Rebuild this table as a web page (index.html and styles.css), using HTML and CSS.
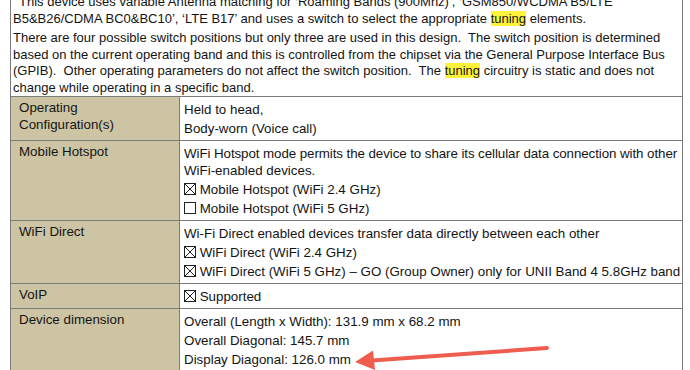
FILE: index.html
```html
<!DOCTYPE html>
<html>
<head>
<meta charset="utf-8">
<link rel="stylesheet" href="styles.css">
</head>
<body>
<table class="doc">
  <colgroup><col class="c1"><col class="c2"></colgroup>
  <tr class="intro">
    <td colspan="2">
      <p class="first">This device uses variable Antenna matching for ‘Roaming Bands (900Mhz)’, ‘GSM850/WCDMA B5/LTE<br>B5&amp;B26/CDMA BC0&amp;BC10’, ‘LTE B17’ and uses a switch to select the appropriate <span class="hl">tuning</span> elements.</p>
      <p>There are four possible switch positions but only three are used in this design.&nbsp; The switch position is determined<br>based on the current operating band and this is controlled from the chipset via the General Purpose Interface Bus<br>(GPIB).&nbsp; Other operating parameters do not affect the switch position.&nbsp; The <span class="hl">tuning</span> circuitry is static and does not<br>change while operating in a specific band.</p>
    </td>
  </tr>
  <tr>
    <td class="label">Operating<br>Configuration(s)</td>
    <td class="val"><p>Held to head,</p><p>Body-worn (Voice call)</p></td>
  </tr>
  <tr>
    <td class="label">Mobile Hotspot</td>
    <td class="val">
      <p><span class="tight">WiFi Hotspot mode permits the device to share its cellular data connection with other</span><br>WiFi-enabled devices.</p>
      <p><svg class="cb" viewBox="0 0 12 12"><rect x="0.5" y="0.5" width="11" height="11"/><path d="M0.5 0.5L11.5 11.5M11.5 0.5L0.5 11.5"/></svg> Mobile Hotspot (WiFi 2.4 GHz)</p>
      <p><svg class="cb" viewBox="0 0 12 12"><rect x="0.5" y="0.5" width="11" height="11"/></svg> Mobile Hotspot (WiFi 5 GHz)</p>
    </td>
  </tr>
  <tr>
    <td class="label">WiFi Direct</td>
    <td class="val">
      <p>Wi-Fi Direct enabled devices transfer data directly between each other</p>
      <p><svg class="cb" viewBox="0 0 12 12"><rect x="0.5" y="0.5" width="11" height="11"/><path d="M0.5 0.5L11.5 11.5M11.5 0.5L0.5 11.5"/></svg> WiFi Direct (WiFi 2.4 GHz)</p>
      <p><svg class="cb" viewBox="0 0 12 12"><rect x="0.5" y="0.5" width="11" height="11"/><path d="M0.5 0.5L11.5 11.5M11.5 0.5L0.5 11.5"/></svg> WiFi Direct (WiFi 5 GHz) – GO (Group Owner) only for UNII Band 4 5.8GHz band</p>
    </td>
  </tr>
  <tr>
    <td class="label">VoIP</td>
    <td class="val"><p><svg class="cb" viewBox="0 0 12 12"><rect x="0.5" y="0.5" width="11" height="11"/><path d="M0.5 0.5L11.5 11.5M11.5 0.5L0.5 11.5"/></svg> Supported</p></td>
  </tr>
  <tr>
    <td class="label">Device dimension</td>
    <td class="val">
      <p>Overall (Length x Width): 131.9 mm x 68.2 mm</p>
      <p>Overall Diagonal: 145.7 mm</p>
      <p>Display Diagonal: 126.0 mm</p>
    </td>
  </tr>
</table>
<svg class="arrow" width="690" height="370" viewBox="0 0 690 370">
  <line x1="547" y1="348" x2="372" y2="360.5" stroke="#ef5d4f" stroke-width="4" stroke-linecap="round"/>
  <polygon points="355,362 373,350.5 375,370" fill="#ef5d4f"/>
</svg>
</body>
</html>
```
FILE: styles.css
```css
html, body {
  margin: 0;
  padding: 0;
  background: #ffffff;
}
body {
  width: 690px;
  height: 370px;
  overflow: hidden;
  position: relative;
  font-family: "Liberation Sans", Arial, Helvetica, sans-serif;
  font-size: 13.35px;
  color: #141414;
}
.doc {
  margin: -6px 0 0 10px;
  width: 672px;
  border-collapse: collapse;
  table-layout: fixed;
}
.c1 { width: 169px; }
.c2 { width: 503px; }
.doc td {
  border: 1px solid #7b7b7b;
  vertical-align: top;
  line-height: 17px;
  white-space: nowrap;
  overflow: hidden;
}
.intro td {
  border-top: none;
  padding: 0 4px 0 2px;
  font-size: 13px;
  line-height: 16.5px;
}
.intro p {
  margin: 0 0 3px;
}
.intro p:last-child {
  margin-bottom: 0;
}
.intro p.first {
  text-indent: 6px;
}
.hl {
  background: #fff23a;
}
.label {
  background: #cdc4a3;
  padding: 2px 6px 3px 8px;
}
.val {
  padding: 2.5px 4px;
}
.val p {
  margin: 0;
  padding: 1px 0;
}
.tight {
  letter-spacing: -0.08px;
}
.cb {
  width: 12px;
  height: 12px;
  vertical-align: -1px;
  fill: none;
  stroke: #222;
  stroke-width: 1;
}
.arrow {
  position: absolute;
  left: 0;
  top: 0;
  pointer-events: none;
}
```
